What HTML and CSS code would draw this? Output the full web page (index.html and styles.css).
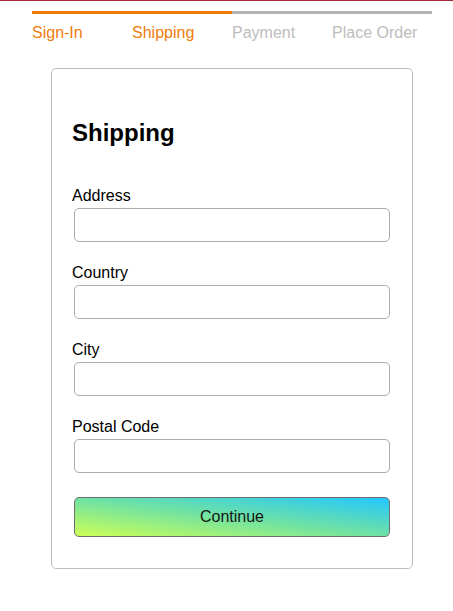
FILE: index.html
```html
<!DOCTYPE html>
<html lang="en">
<head>
<meta charset="utf-8">
<title>Shipping</title>
<link rel="stylesheet" href="styles.css">
</head>
<body>
<div class="topline"></div>
<div class="steps">
  <div class="step active">Sign-In</div>
  <div class="step active">Shipping</div>
  <div class="step">Payment</div>
  <div class="step">Place Order</div>
</div>
<form class="card">
  <h1 class="title">Shipping</h1>
  <label class="field">
    <span class="label">Address</span>
    <input class="input" type="text">
  </label>
  <label class="field">
    <span class="label">Country</span>
    <input class="input" type="text">
  </label>
  <label class="field">
    <span class="label">City</span>
    <input class="input" type="text">
  </label>
  <label class="field">
    <span class="label">Postal Code</span>
    <input class="input" type="text">
  </label>
  <button class="btn" type="button">Continue</button>
</form>
</body>
</html>
```
FILE: styles.css
```css
* { box-sizing: border-box; }
html, body { margin: 0; padding: 0; background: #fff; }
body {
  font-family: "Liberation Sans", Arial, Helvetica, sans-serif;
  font-size: 16px;
  color: #000;
}
.topline {
  height: 1px;
  background: #a52a3a;
}
.steps {
  display: flex;
  margin: 10px 0 0 32px;
  width: 400px;
}
.step {
  width: 100px;
  border-top: 3px solid #b3b3b3;
  padding-top: 10px;
  color: #bdbdbd;
  line-height: 18px;
}
.step.active {
  border-top-color: #ee7a0a;
  color: #f07c0c;
}
.card {
  margin: 26px 0 0 51px;
  width: 362px;
  border: 1px solid #bdbdbd;
  border-radius: 5px;
  padding: 20px 20px 29px;
  display: flex;
  flex-direction: column;
}
.title {
  margin: 30px 0 40px;
  font-size: 24px;
  line-height: 28px;
  font-weight: bold;
}
.field {
  display: flex;
  flex-direction: column;
  margin-bottom: 20px;
}
.label {
  line-height: 18px;
}
.input {
  margin: 3px 2px 2px;
  height: 34px;
  border: 1px solid #ababab;
  border-radius: 5px;
  font: inherit;
  padding: 0 8px;
  background: #fff;
}
.btn {
  margin: 2px 2px 2px;
  height: 40px;
  border: 1px solid #6e6e6e;
  border-radius: 5px;
  background: linear-gradient(to top right, #ccff55, #6fe2a4 50%, #22c6ff);
  font: inherit;
  color: #161616;
}
```
